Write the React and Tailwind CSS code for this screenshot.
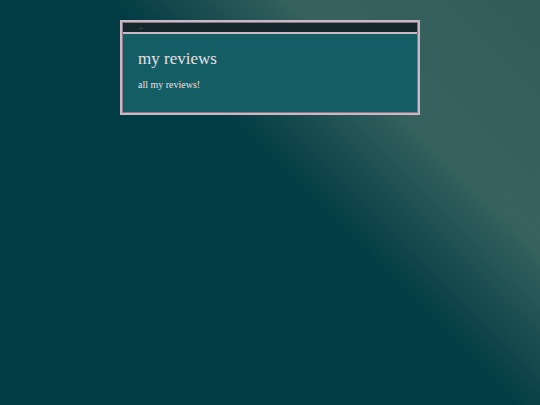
export default function App() {
  return (
    <div
      className="min-h-screen w-full bg-[linear-gradient(45deg,#013b43_0%,#013b43_54%,#37625f_74%,#325c5a_100%)] pt-[20px]"
      style={{ fontFamily: '"Liberation Serif", "DejaVu Serif", serif' }}
    >
      <div className="mx-auto w-[300px] border-2 border-[#cdb7c6] bg-[#857a84] p-px">
        <div className="flex h-[9px] items-center bg-[#13262b] pl-[16px]">
          <span className="text-[5px] leading-none text-[#d9d0d6]">...</span>
        </div>
        <div className="h-[2px] bg-[#cdb7c6]" />
        <div className="bg-[#155d65] px-[15px] pt-[14px] pb-[21px] text-[#e8e0e5]">
          <h1 className="text-[17px] leading-[22px]">my reviews</h1>
          <p className="mt-[8px] text-[10px] leading-[13px]">all my reviews!</p>
        </div>
      </div>
    </div>
  );
}
